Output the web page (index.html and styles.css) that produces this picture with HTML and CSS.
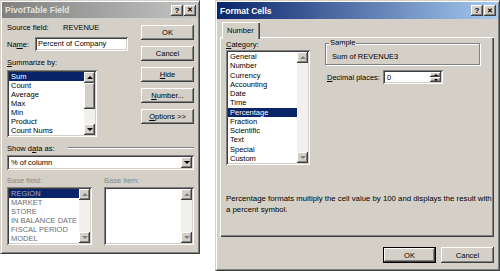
FILE: index.html
```html
<!DOCTYPE html>
<html>
<head>
<title>PivotTable Field - Format Cells</title>
<link rel="stylesheet" href="styles.css">
</head>
<body>
<div class="desk">

    <!-- PivotTable Field dialog (inactive) -->
    <div class="dialog pivot">
        <div class="titlebar inactive">
            <span class="title">PivotTable Field</span>
            <span class="tb-btn">?</span>
            <span class="tb-btn close">&#x2715;</span>
        </div>
        <div class="pv-body">
            <div class="pv-top">
                <div class="pv-left">
                    <div class="row src-row">
                        <span class="src-label">Source field:</span>
                        <span>REVENUE</span>
                    </div>
                    <div class="row name-row">
                        <span class="name-label">Na<u>m</u>e:</span>
                        <div class="field name-field">Percent of Company</div>
                    </div>
                    <div class="lbl sum-label"><u>S</u>ummarize by:</div>
                    <div class="listbox sum-list">
                        <ul>
                            <li class="sel">Sum</li>
                            <li>Count</li>
                            <li>Average</li>
                            <li>Max</li>
                            <li>Min</li>
                            <li>Product</li>
                            <li>Count Nums</li>
                        </ul>
                        <div class="vscroll">
                            <div class="arrow up"></div>
                            <div class="thumb"></div>
                            <div class="track"></div>
                            <div class="arrow down"></div>
                        </div>
                    </div>
                </div>
                <div class="pv-buttons">
                    <div class="btn">OK</div>
                    <div class="btn">Cancel</div>
                    <div class="btn"><u>H</u>ide</div>
                    <div class="btn"><u>N</u>umber...</div>
                    <div class="btn"><u>O</u>ptions &gt;&gt;</div>
                </div>
            </div>

            <div class="group-head">
                <span>Show d<u>a</u>ta as:</span>
                <span class="rule"></span>
            </div>
            <div class="field combo">
                <span class="combo-text">% of column</span>
                <span class="arrow down"></span>
            </div>

            <div class="base">
                <div class="base-col field-col">
                    <div class="lbl disabled">Base field:</div>
                    <div class="listbox base-list">
                        <ul class="dim">
                            <li class="sel">REGION</li>
                            <li>MARKET</li>
                            <li>STORE</li>
                            <li>IN BALANCE DATE</li>
                            <li>FISCAL PERIOD</li>
                            <li>MODEL</li>
                        </ul>
                        <div class="vscroll">
                            <div class="arrow up off"></div>
                            <div class="track"></div>
                            <div class="arrow down off"></div>
                        </div>
                    </div>
                </div>
                <div class="base-col item-col">
                    <div class="lbl disabled">Base item:</div>
                    <div class="listbox base-list">
                        <ul></ul>
                        <div class="vscroll">
                            <div class="arrow up off"></div>
                            <div class="track"></div>
                            <div class="arrow down off"></div>
                        </div>
                    </div>
                </div>
            </div>
        </div>
    </div>

    <!-- Format Cells dialog (active) -->
    <div class="dialog fmt">
        <div class="titlebar active">
            <span class="title">Format Cells</span>
            <span class="tb-btn">?</span>
            <span class="tb-btn close">&#x2715;</span>
        </div>
        <div class="fmt-body">
            <div class="tabs">
                <div class="tab">Number</div>
            </div>
            <div class="panel">
                <div class="panel-top">
                    <div class="cat-col">
                        <div class="lbl"><u>C</u>ategory:</div>
                        <div class="listbox cat-list">
                            <ul>
                                <li>General</li>
                                <li>Number</li>
                                <li>Currency</li>
                                <li>Accounting</li>
                                <li>Date</li>
                                <li>Time</li>
                                <li class="sel">Percentage</li>
                                <li>Fraction</li>
                                <li>Scientific</li>
                                <li>Text</li>
                                <li>Special</li>
                                <li>Custom</li>
                            </ul>
                            <div class="vscroll">
                                <div class="arrow up off"></div>
                                <div class="track"></div>
                                <div class="arrow down off"></div>
                            </div>
                        </div>
                    </div>
                    <div class="opt-col">
                        <fieldset class="sample">
                            <legend>Sample</legend>
                            <div class="sample-text">Sum of REVENUE3</div>
                        </fieldset>
                        <div class="dec-row">
                            <span class="dec-label"><u>D</u>ecimal places:</span>
                            <div class="field spinner">
                                <span class="spin-text">0</span>
                                <span class="spin-btns">
                                    <span class="arrow up"></span>
                                    <span class="arrow down"></span>
                                </span>
                            </div>
                        </div>
                    </div>
                </div>
                <p class="desc">Percentage formats multiply the cell value by 100 and displays the result with<br>a percent symbol.</p>
            </div>
            <div class="footer">
                <div class="btn default">OK</div>
                <div class="btn">Cancel</div>
            </div>
        </div>
    </div>

</div>
</body>
</html>
```

FILE: styles.css
```css
* {
    box-sizing: border-box;
}

body {
    margin: 0;
    background-color: #fff;
    font-family: "Liberation Sans", Arial, sans-serif;
    font-size: 7.5px;
    color: #000;
    overflow: hidden;
}

u {
    text-decoration: underline;
    text-underline-offset: 1px;
}

.desk {
    display: flex;
    align-items: flex-start;
    gap: 15px;
    height: 271px;
}

/* Window frame */
.dialog {
    display: flex;
    flex-direction: column;
    flex: none;
    background-color: #d4d0c8;
    border: 1px solid;
    border-color: #d4d0c8 #404040 #404040 #d4d0c8;
    box-shadow: inset 1px 1px #fff, inset -1px -1px #808080;
    padding: 1px;
}

.pivot {
    width: 200px;
    height: 254px;
}

.fmt {
    width: 285px;
    height: 271px;
}

.titlebar {
    display: flex;
    align-items: center;
    height: 16px;
    padding: 0 2px 0 3px;
    font-size: 8.5px;
    font-weight: bold;
    color: #fff;
}

.titlebar.inactive {
    background: linear-gradient(to right, #808080, #c4c4c4);
    color: #e4e2dc;
}

.titlebar.active {
    height: 17px;
    background: linear-gradient(to right, #0a246a, #a6caf0);
}

.title {
    flex: 1;
}

.tb-btn {
    display: flex;
    align-items: center;
    justify-content: center;
    width: 12px;
    height: 11px;
    background-color: #d4d0c8;
    color: #000;
    font-size: 8px;
    font-weight: bold;
    box-shadow: inset -1px -1px #404040, inset 1px 1px #fff, inset -2px -2px #808080;
}

.tb-btn.close {
    margin-left: 1px;
    font-size: 7px;
}

/* Common controls */
.btn {
    display: flex;
    align-items: center;
    justify-content: center;
    width: 53px;
    height: 15px;
    background-color: #d4d0c8;
    box-shadow: inset -1px -1px #404040, inset 1px 1px #fff, inset -2px -2px #808080, inset 2px 2px #d4d0c8;
}

.btn.default {
    border: 1px solid #000;
    box-shadow: inset -1px -1px #404040, inset 1px 1px #fff, inset -2px -2px #808080;
}

.field {
    background-color: #fff;
    padding: 2px;
    box-shadow: inset 1px 1px #808080, inset -1px -1px #fff, inset 2px 2px #404040, inset -2px -2px #d4d0c8;
}

.lbl {
    height: 10px;
    line-height: 10px;
    white-space: nowrap;
}

.disabled {
    color: #8a8a8a;
}

.listbox {
    display: flex;
    background-color: #fff;
    padding: 2px;
    box-shadow: inset 1px 1px #808080, inset -1px -1px #fff, inset 2px 2px #404040, inset -2px -2px #d4d0c8;
    overflow: hidden;
}

.listbox ul {
    flex: 1;
    list-style: none;
    margin: 0;
    padding: 0;
    overflow: hidden;
}

.listbox li {
    height: 9px;
    line-height: 9px;
    padding-left: 2px;
    white-space: nowrap;
}

.listbox li.sel {
    background-color: #0a246a;
    color: #fff;
}

.listbox ul.dim li {
    color: #6e6e6e;
}

.listbox ul.dim li.sel {
    color: #a9a9c4;
}

.vscroll {
    display: flex;
    flex-direction: column;
    width: 11px;
    background-color: #f1f0ec;
}

.track {
    flex: 1;
}

.thumb {
    height: 26px;
    background-color: #d4d0c8;
    box-shadow: inset -1px -1px #404040, inset 1px 1px #fff, inset -2px -2px #808080;
}

.arrow {
    display: flex;
    align-items: center;
    justify-content: center;
    width: 11px;
    height: 11px;
    background-color: #d4d0c8;
    box-shadow: inset -1px -1px #404040, inset 1px 1px #fff, inset -2px -2px #808080;
}

.arrow::after {
    content: "";
    width: 0;
    height: 0;
    border-left: 3px solid transparent;
    border-right: 3px solid transparent;
}

.arrow.up::after {
    border-bottom: 3px solid #000;
}

.arrow.down::after {
    border-top: 3px solid #000;
}

.arrow.off.up::after {
    border-bottom-color: #808080;
}

.arrow.off.down::after {
    border-top-color: #808080;
}

/* PivotTable Field body */
.pv-body {
    flex: 1;
    display: flex;
    flex-direction: column;
    padding: 3px 4px 0 5px;
}

.pv-top {
    display: flex;
    justify-content: space-between;
}

.pv-left {
    display: flex;
    flex-direction: column;
    width: 121px;
}

.row {
    display: flex;
    align-items: center;
}

.src-row {
    height: 12px;
}

.src-label {
    width: 56px;
}

.name-row {
    height: 14px;
    margin-top: 4px;
}

.name-label {
    width: 28px;
}

.name-field {
    width: 93px;
    height: 14px;
    line-height: 10px;
    padding-left: 3px;
}

.sum-label {
    margin-top: 7px;
}

.sum-list {
    width: 90px;
    height: 67px;
    margin-top: 2px;
}

.pv-buttons {
    display: flex;
    flex-direction: column;
    gap: 6px;
    margin-top: 4px;
}

.group-head {
    display: flex;
    align-items: center;
    height: 10px;
    margin-top: 6px;
}

.rule {
    flex: 1;
    height: 2px;
    margin-left: 13px;
    border-top: 1px solid #808080;
    border-bottom: 1px solid #fff;
}

.combo {
    display: flex;
    align-items: center;
    height: 15px;
    margin-top: 2px;
}

.combo-text {
    flex: 1;
    padding-left: 2px;
}

.base {
    display: flex;
    justify-content: space-between;
    margin-top: 6px;
}

.field-col {
    width: 85px;
}

.item-col {
    width: 90px;
}

.base-list {
    height: 58px;
    margin-top: 1px;
}

/* Format Cells body */
.fmt-body {
    flex: 1;
    display: flex;
    flex-direction: column;
    padding: 0 4px 0 3px;
}

.tabs {
    display: flex;
    padding-left: 2px;
    margin-top: 3px;
}

.tab {
    position: relative;
    z-index: 1;
    width: 38px;
    height: 17px;
    margin-bottom: -2px;
    padding: 4px 0 0 5px;
    background-color: #d4d0c8;
    box-shadow: inset 1px 1px #fff, inset -1px 0 #404040, inset -2px 0 #808080;
}

.panel {
    display: flex;
    flex-direction: column;
    height: 200px;
    padding: 3px 3px 0 6px;
    box-shadow: inset 1px 1px #fff, inset -1px -1px #404040, inset -2px -2px #808080;
}

.panel-top {
    display: flex;
    gap: 15px;
}

.cat-col {
    width: 84px;
}

.cat-list {
    height: 115px;
}

.cat-list li {
    height: 9.25px;
    line-height: 9.25px;
}

.opt-col {
    width: 155px;
}

.sample {
    margin: -2px 0 0;
    padding: 4px 6px 1px;
    height: 27px;
    border: 1px solid #808080;
    box-shadow: inset 1px 1px #fff, 1px 1px #fff;
}

.sample legend {
    padding: 0 1px;
    margin-left: -3px;
    line-height: 10px;
}

.sample-text {
    line-height: 10px;
}

.dec-row {
    display: flex;
    align-items: center;
    margin-top: 5px;
    padding-left: 2px;
}

.dec-label {
    width: 56px;
    white-space: nowrap;
}

.spinner {
    display: flex;
    align-items: center;
    width: 60px;
    height: 14px;
}

.spin-text {
    flex: 1;
    padding-left: 2px;
}

.spin-btns {
    display: flex;
    flex-direction: column;
}

.spin-btns .arrow {
    width: 11px;
    height: 5px;
}

.spin-btns .arrow::after {
    border-left-width: 2px;
    border-right-width: 2px;
}

.spin-btns .arrow.up::after {
    border-bottom-width: 2px;
}

.spin-btns .arrow.down::after {
    border-top-width: 2px;
}

.desc {
    margin: 28px 0 0;
    font-size: 7.8px;
    line-height: 11px;
    white-space: nowrap;
}

.footer {
    display: flex;
    justify-content: flex-end;
    gap: 5px;
    margin-top: 10px;
}

.footer .btn {
    height: 16px;
}
```
